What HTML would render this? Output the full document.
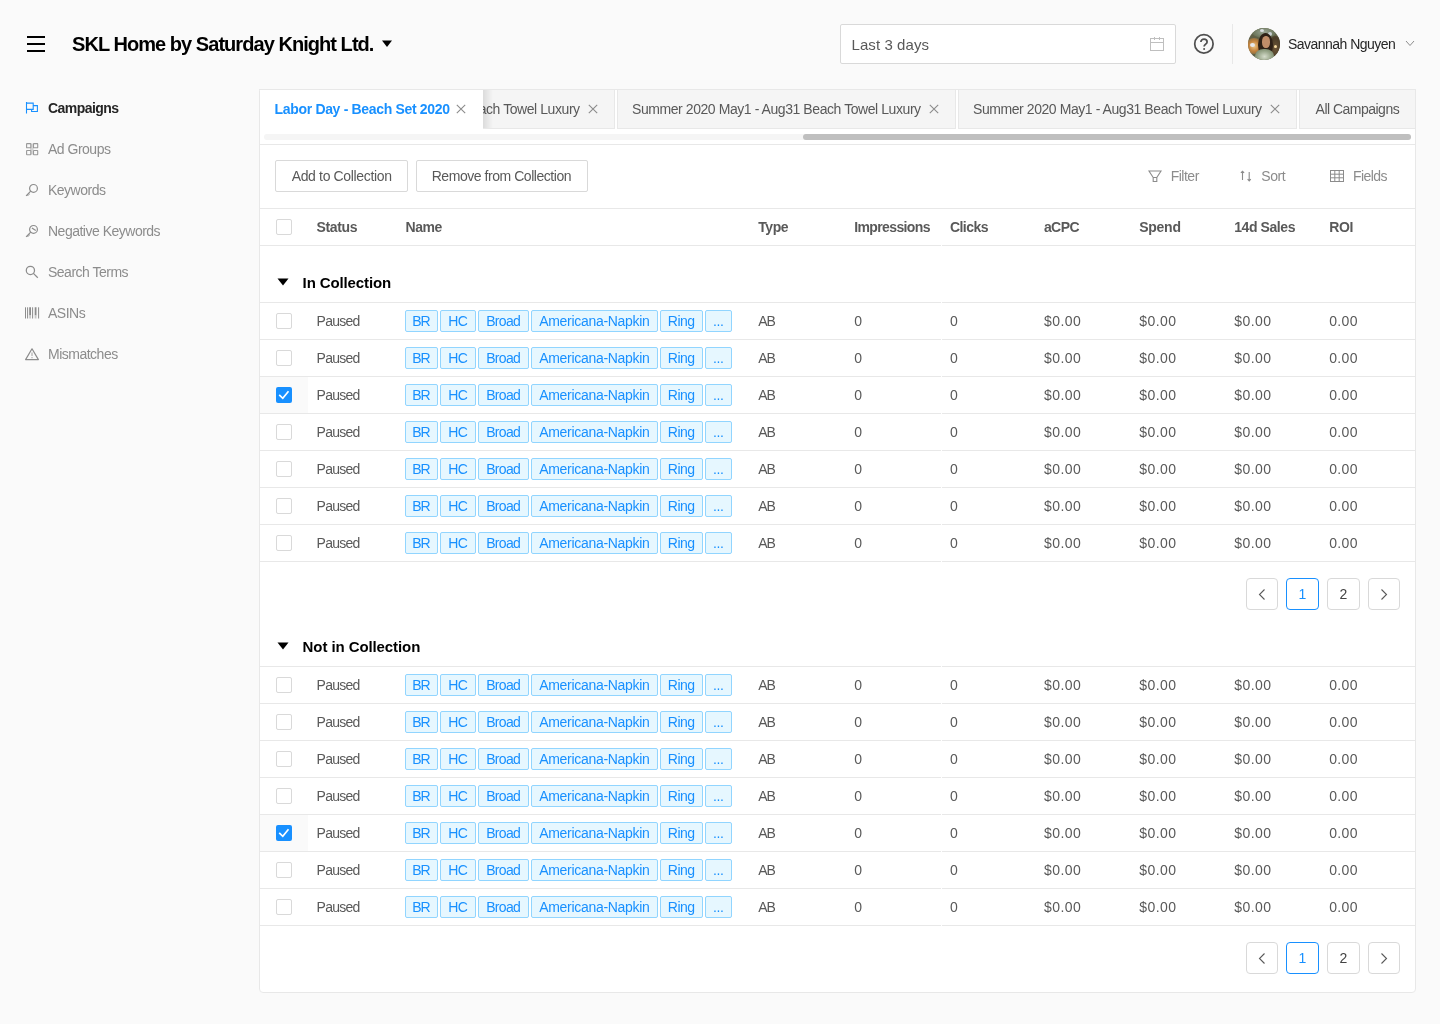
<!DOCTYPE html>
<html><head><meta charset="utf-8"><title>Campaigns</title>
<style>
html,body{margin:0;padding:0;}
body{width:1440px;height:1024px;overflow:hidden;background:#fafafa;font-family:"Liberation Sans", sans-serif;position:relative;}
.a{position:absolute;}
.t{position:absolute;white-space:nowrap;}
svg.a{overflow:visible;}
</style></head><body><div id="root" style="position:absolute;left:0;top:0;width:1440px;height:1024px;will-change:transform">
<div class="a" style="left:27px;top:36px;width:18px;height:2px;background:#000;"></div>
<div class="a" style="left:27px;top:43px;width:18px;height:2px;background:#000;"></div>
<div class="a" style="left:27px;top:50px;width:18px;height:2px;background:#000;"></div>
<div class="t" style="left:72px;top:32.87px;font-size:20px;line-height:22px;color:#000;font-weight:bold;letter-spacing:-0.95px;">SKL Home by Saturday Knight Ltd.</div>
<svg class="a" style="left:381px;top:40px" width="12" height="8" viewBox="0 0 12 8"><path d="M1 0.5 L11 0.5 L6 7 Z" fill="#000"/></svg>
<div class="a" style="left:840px;top:24px;width:336px;height:40px;box-sizing:border-box;border:1px solid #d9d9d9;border-radius:2px;background:#fff;"></div>
<div class="t" style="left:851.5px;top:36.10px;font-size:15px;line-height:17px;color:#595959;letter-spacing:0.08px;">Last 3 days</div>
<svg class="a" style="left:1149px;top:36px" width="16" height="16" viewBox="0 0 16 16" fill="none" stroke="#bfbfbf" stroke-width="1"><rect x="1.5" y="2.5" width="13" height="12"/><path d="M1.5 6.5 H14.5 M5.5 1 V4 M10.5 1 V4"/></svg>
<svg class="a" style="left:1192px;top:32px" width="24" height="24" viewBox="0 0 24 24" fill="none" stroke="#4f4f4f" stroke-width="1.75"><circle cx="11.9" cy="11.9" r="9.2"/><path d="M8.9 10 C8.9 8 10.3 7.1 12 7.1 C13.8 7.1 15.1 8.2 15.1 9.9 C15.1 11.9 12.1 12.3 12.1 14.6"/><circle cx="12.1" cy="17.05" r="1" fill="#4f4f4f" stroke="none"/></svg>
<div class="a" style="left:1232px;top:24px;width:1px;height:40px;background:#e8e8e8;"></div>
<div class="a" style="left:1248px;top:28px;width:32px;height:32px;border-radius:50%;overflow:hidden;background:#5f6147;"><div class="a" style="left:-2px;top:-2px;width:36px;height:36px;filter:blur(0.6px);"><div class="a" style="left:6px;top:0px;width:24px;height:12px;border-radius:50%;background:radial-gradient(ellipse, #9aa596 0, #6f7a5f 60%, rgba(95,97,71,0) 100%);"></div><div class="a" style="left:14px;top:3px;width:4px;height:3px;border-radius:50%;background:#d8dde0;"></div><div class="a" style="left:22px;top:6px;width:4px;height:4px;border-radius:50%;background:#c9d0d4;"></div><div class="a" style="left:0px;top:12px;width:16px;height:16px;border-radius:50%;background:radial-gradient(ellipse, #f0c98a 0, #c2833f 45%, rgba(95,97,71,0) 100%);"></div><div class="a" style="left:4px;top:17px;width:5px;height:4px;border-radius:50%;background:#e6e9ee;"></div><div class="a" style="left:23px;top:10px;width:13px;height:24px;border-radius:40%;background:radial-gradient(ellipse, #6d5638 0, #4a3c28 60%, rgba(60,50,35,0) 100%);"></div><div class="a" style="left:28px;top:19px;width:3px;height:3px;border-radius:50%;background:#f4d9a0;"></div><div class="a" style="left:12px;top:7px;width:15px;height:24px;border-radius:50%;background:#2e2117;"></div><div class="a" style="left:16px;top:10px;width:8px;height:12px;border-radius:45%;background:#c08d69;"></div><div class="a" style="left:9px;top:23px;width:19px;height:15px;border-radius:45%;background:radial-gradient(ellipse, #d5dccb 0, #93a184 55%, #66745a 100%);"></div></div></div>
<div class="t" style="left:1288px;top:36.05px;font-size:14px;line-height:16px;color:#262626;letter-spacing:-0.529px;">Savannah Nguyen</div>
<svg class="a" style="left:1404px;top:38px" width="12" height="10" viewBox="0 0 12 10" fill="none" stroke="#8c8c8c" stroke-width="1"><path d="M2 3 L6 7.5 L10 3"/></svg>
<div class="t" style="left:48px;top:99.85px;font-size:14px;line-height:16px;color:#262626;font-weight:bold;letter-spacing:-0.55px;">Campaigns</div>
<svg class="a" style="left:25px;top:102px" width="14" height="13" viewBox="0 0 14 13" fill="none" stroke-width="1"><path d="M1.5 0 V11.6 M1.5 1.1 H8.2 V7.4 H1.5 M8.2 3.6 H12.4 V9.5 H6.6 V7.4" stroke="#1890ff" stroke-width="1.1"/></svg>
<div class="t" style="left:48px;top:140.85px;font-size:14px;line-height:16px;color:#8c8c8c;letter-spacing:-0.5px;">Ad Groups</div>
<svg class="a" style="left:25px;top:143px" width="14" height="13" viewBox="0 0 14 13" fill="none" stroke-width="1"><path d="M5 6 H8.5 M6.9 0.5 V11.5" stroke="#d4d4d4" stroke-width="2"/><g stroke="#999" stroke-width="1.1"><rect x="1.6" y="0.6" width="4.2" height="4.2" rx="0.4"/><rect x="8.5" y="0.6" width="4.2" height="4.2" rx="0.4"/><rect x="1.6" y="7.5" width="4.2" height="4.2" rx="0.4"/><rect x="8.5" y="7.5" width="4.2" height="4.2" rx="0.4"/></g></svg>
<div class="t" style="left:48px;top:181.85px;font-size:14px;line-height:16px;color:#8c8c8c;letter-spacing:-0.5px;">Keywords</div>
<svg class="a" style="left:25px;top:184px" width="14" height="13" viewBox="0 0 14 13" fill="none" stroke-width="1"><g stroke="#8c8c8c" stroke-width="1.2"><circle cx="8.5" cy="4.4" r="3.9"/><path d="M5.7 7.2 L1.1 11.8 M2.4 10.5 L3.4 11.5 M3.6 9.3 L4.6 10.3"/></g></svg>
<div class="t" style="left:48px;top:222.85px;font-size:14px;line-height:16px;color:#8c8c8c;letter-spacing:-0.5px;">Negative Keywords</div>
<svg class="a" style="left:25px;top:225px" width="14" height="13" viewBox="0 0 14 13" fill="none" stroke-width="1"><g stroke="#8c8c8c" stroke-width="1.2"><circle cx="8.5" cy="4.4" r="3.9"/><path d="M5.7 7.2 L1.1 11.8 M2.4 10.5 L3.4 11.5 M3.6 9.3 L4.6 10.3 M6.9 3.0 L10.8 5.6"/></g></svg>
<div class="t" style="left:48px;top:263.85px;font-size:14px;line-height:16px;color:#8c8c8c;letter-spacing:-0.5px;">Search Terms</div>
<svg class="a" style="left:25px;top:266px" width="14" height="13" viewBox="0 0 14 13" fill="none" stroke-width="1"><g stroke="#8c8c8c" stroke-width="1.25"><circle cx="5.4" cy="4.4" r="4.1"/><path d="M8.4 7.4 L12.8 11.7"/></g></svg>
<div class="t" style="left:48px;top:304.85px;font-size:14px;line-height:16px;color:#8c8c8c;letter-spacing:-0.5px;">ASINs</div>
<svg class="a" style="left:25px;top:307px" width="14" height="13" viewBox="0 0 14 13" fill="none" stroke-width="1"><g stroke="#8c8c8c"><path d="M0.5 0.3 V11.5 M2.6 0.3 V11.5 M7.6 0.3 V11.5 M13.6 0.3 V11.5" stroke-width="1"/><path d="M5.1 0.3 V8.5 M10.6 0.3 V8.5" stroke-width="1.8"/><path d="M5.1 8.5 V11.5 M10.6 8.5 V11.5" stroke="#c8c8c8" stroke-width="1.8"/></g></svg>
<div class="t" style="left:48px;top:345.85px;font-size:14px;line-height:16px;color:#8c8c8c;letter-spacing:-0.5px;">Mismatches</div>
<svg class="a" style="left:25px;top:348px" width="14" height="13" viewBox="0 0 14 13" fill="none" stroke-width="1"><g stroke="#8c8c8c" stroke-width="1.2"><path d="M7 0.8 L13.4 11.6 H0.6 Z" stroke-linejoin="round"/><path d="M7 4.4 V8.0 M7 9.1 V10.2" stroke="#b0b0b0"/></g></svg>
<div class="a" style="left:259px;top:89px;width:1157px;height:904px;box-sizing:border-box;border:1px solid #e8e8e8;border-radius:2px 2px 4px 4px;background:#fff;"></div>
<div class="a" style="left:276px;top:89px;width:339px;height:40px;box-sizing:border-box;border:1px solid #e8e8e8;background:#f5f5f5;"></div>
<div class="t" style="left:291px;top:101.15px;font-size:14px;line-height:16px;color:#595959;letter-spacing:-0.429px;">Summer 2020 May1 - Aug31 Beach Towel Luxury</div>
<svg class="a" style="left:588px;top:104px" width="10" height="10" viewBox="0 0 10 10" fill="none" stroke="#8c8c8c" stroke-width="1.1"><path d="M0.8 0.8 L9.2 9.2 M9.2 0.8 L0.8 9.2"/></svg>
<div class="a" style="left:617px;top:89px;width:339px;height:40px;box-sizing:border-box;border:1px solid #e8e8e8;background:#f5f5f5;"></div>
<div class="t" style="left:632px;top:101.15px;font-size:14px;line-height:16px;color:#595959;letter-spacing:-0.429px;">Summer 2020 May1 - Aug31 Beach Towel Luxury</div>
<svg class="a" style="left:929px;top:104px" width="10" height="10" viewBox="0 0 10 10" fill="none" stroke="#8c8c8c" stroke-width="1.1"><path d="M0.8 0.8 L9.2 9.2 M9.2 0.8 L0.8 9.2"/></svg>
<div class="a" style="left:958px;top:89px;width:339px;height:40px;box-sizing:border-box;border:1px solid #e8e8e8;background:#f5f5f5;"></div>
<div class="t" style="left:973px;top:101.15px;font-size:14px;line-height:16px;color:#595959;letter-spacing:-0.429px;">Summer 2020 May1 - Aug31 Beach Towel Luxury</div>
<svg class="a" style="left:1270px;top:104px" width="10" height="10" viewBox="0 0 10 10" fill="none" stroke="#8c8c8c" stroke-width="1.1"><path d="M0.8 0.8 L9.2 9.2 M9.2 0.8 L0.8 9.2"/></svg>
<div class="a" style="left:1299px;top:89px;width:117px;height:40px;box-sizing:border-box;border:1px solid #e8e8e8;background:#f5f5f5;"></div>
<div class="t" style="left:1315.6px;top:101.15px;font-size:14px;line-height:16px;color:#595959;letter-spacing:-0.517px;">All Campaigns</div>
<div class="a" style="left:260px;top:90px;width:223px;height:39px;background:#fff;"></div>
<div class="a" style="left:483px;top:90px;width:10px;height:38px;background:linear-gradient(to right, rgba(0,0,0,0.10), rgba(0,0,0,0));"></div>
<div class="a" style="left:259px;top:89px;width:225px;height:1px;background:#e8e8e8;"></div>
<div class="t" style="left:274.6px;top:101.15px;font-size:14px;line-height:16px;color:#1890ff;font-weight:bold;letter-spacing:-0.332px;">Labor Day - Beach Set 2020</div>
<svg class="a" style="left:456px;top:104px" width="10" height="10" viewBox="0 0 10 10" fill="none" stroke="#8c8c8c" stroke-width="1.1"><path d="M0.8 0.8 L9.2 9.2 M9.2 0.8 L0.8 9.2"/></svg>
<div class="a" style="left:264px;top:134px;width:1147px;height:6px;background:#f5f5f5;border-radius:3px;"></div>
<div class="a" style="left:803px;top:134px;width:608px;height:6px;background:#bfbfbf;border-radius:3px;"></div>
<div class="a" style="left:260px;top:144px;width:1155px;height:1px;background:#e8e8e8;"></div>
<div class="a" style="left:275px;top:160px;width:133px;height:32px;box-sizing:border-box;border:1px solid #d9d9d9;border-radius:2px;background:#fff;"></div>
<div class="t" style="left:291.7px;top:168.15px;font-size:14px;line-height:16px;color:#595959;letter-spacing:-0.35px;">Add to Collection</div>
<div class="a" style="left:416px;top:160px;width:172px;height:32px;box-sizing:border-box;border:1px solid #d9d9d9;border-radius:2px;background:#fff;"></div>
<div class="t" style="left:431.7px;top:168.15px;font-size:14px;line-height:16px;color:#595959;letter-spacing:-0.452px;">Remove from Collection</div>
<svg class="a" style="left:1148px;top:170px" width="14" height="13" viewBox="0 0 14 13" fill="none" stroke="#8c8c8c" stroke-width="1.1"><path d="M1 1 H13 L8.8 7.5 H5.2 Z M5.2 7.5 V11.5 H8.8 V7.5"/></svg>
<div class="t" style="left:1170.7px;top:167.95px;font-size:14px;line-height:16px;color:#8c8c8c;letter-spacing:-0.5px;">Filter</div>
<svg class="a" style="left:1239px;top:170px" width="14" height="12" viewBox="0 0 14 12" fill="none" stroke="#8c8c8c" stroke-width="1.1"><path d="M3.5 1.2 V10 M1.9 2.9 L3.5 1.2 L5.1 2.9 M10.2 2 V11 M8.6 9.2 L10.2 10.9 L11.8 9.2"/></svg>
<div class="t" style="left:1261.3px;top:167.95px;font-size:14px;line-height:16px;color:#8c8c8c;letter-spacing:-0.467px;">Sort</div>
<svg class="a" style="left:1330px;top:170px" width="14" height="12" viewBox="0 0 14 12" fill="none" stroke="#8c8c8c" stroke-width="1"><rect x="0.5" y="0.5" width="13" height="11"/><path d="M0.5 4.2 H13.5 M0.5 7.8 H13.5 M4.8 0.5 V11.5 M9.2 0.5 V11.5"/></svg>
<div class="t" style="left:1352.9px;top:167.95px;font-size:14px;line-height:16px;color:#8c8c8c;letter-spacing:-0.54px;">Fields</div>
<div class="a" style="left:260px;top:208px;width:1155px;height:1px;background:#e8e8e8;"></div>
<div class="a" style="left:276px;top:219px;width:16px;height:16px;box-sizing:border-box;border:1px solid #d9d9d9;border-radius:2px;background:#fff;"></div>
<div class="t" style="left:316.4px;top:219.15px;font-size:14px;line-height:16px;color:#595959;font-weight:bold;letter-spacing:-0.32px;">Status</div>
<div class="t" style="left:405.6px;top:219.15px;font-size:14px;line-height:16px;color:#595959;font-weight:bold;letter-spacing:-0.5px;">Name</div>
<div class="t" style="left:758.3px;top:219.15px;font-size:14px;line-height:16px;color:#595959;font-weight:bold;letter-spacing:-0.467px;">Type</div>
<div class="t" style="left:854.3px;top:219.15px;font-size:14px;line-height:16px;color:#595959;font-weight:bold;letter-spacing:-0.63px;">Impressions</div>
<div class="t" style="left:949.9px;top:219.15px;font-size:14px;line-height:16px;color:#595959;font-weight:bold;letter-spacing:-0.54px;">Clicks</div>
<div class="t" style="left:1043.9px;top:219.15px;font-size:14px;line-height:16px;color:#595959;font-weight:bold;letter-spacing:-0.567px;">aCPC</div>
<div class="t" style="left:1139.2px;top:219.15px;font-size:14px;line-height:16px;color:#595959;font-weight:bold;letter-spacing:-0.25px;">Spend</div>
<div class="t" style="left:1234.2px;top:219.15px;font-size:14px;line-height:16px;color:#595959;font-weight:bold;letter-spacing:-0.412px;">14d Sales</div>
<div class="t" style="left:1329.2px;top:219.15px;font-size:14px;line-height:16px;color:#595959;font-weight:bold;letter-spacing:-0.4px;">ROI</div>
<div class="a" style="left:260px;top:245px;width:681px;height:1px;background:#e8e8e8;"></div><div class="a" style="left:942px;top:245px;width:473px;height:1px;background:#e8e8e8;"></div>
<svg class="a" style="left:277px;top:278.1px" width="12" height="8" viewBox="0 0 12 8"><path d="M0.5 0.5 H11.5 L6 7.5 Z" fill="#000"/></svg>
<div class="t" style="left:302.6px;top:274.40px;font-size:15px;line-height:17px;color:#000;font-weight:bold;letter-spacing:-0.117px;">In Collection</div>
<div class="a" style="left:260px;top:302px;width:681px;height:1px;background:#e8e8e8;"></div><div class="a" style="left:942px;top:302px;width:473px;height:1px;background:#e8e8e8;"></div>
<div class="a" style="left:276px;top:313px;width:16px;height:16px;box-sizing:border-box;border:1px solid #d9d9d9;border-radius:2px;background:#fff;"></div><div class="t" style="left:316.6px;top:313.35px;font-size:14px;line-height:16px;color:#595959;letter-spacing:-0.76px;">Paused</div><div class="a" style="left:405px;top:310px;width:33px;height:22px;box-sizing:border-box;border:1px solid #91d5ff;border-radius:2px;background:#e6f7ff;"></div><div class="t" style="left:405px;width:33px;top:313.15px;font-size:14px;line-height:16px;color:#1890ff;text-align:center;letter-spacing:-1.0px;text-indent:-1.0px">BR</div><div class="a" style="left:440px;top:310px;width:36px;height:22px;box-sizing:border-box;border:1px solid #91d5ff;border-radius:2px;background:#e6f7ff;"></div><div class="t" style="left:440px;width:36px;top:313.15px;font-size:14px;line-height:16px;color:#1890ff;text-align:center;letter-spacing:-0.7px;text-indent:-0.7px">HC</div><div class="a" style="left:478px;top:310px;width:51px;height:22px;box-sizing:border-box;border:1px solid #91d5ff;border-radius:2px;background:#e6f7ff;"></div><div class="t" style="left:478px;width:51px;top:313.15px;font-size:14px;line-height:16px;color:#1890ff;text-align:center;letter-spacing:-0.65px;text-indent:-0.65px">Broad</div><div class="a" style="left:531px;top:310px;width:127px;height:22px;box-sizing:border-box;border:1px solid #91d5ff;border-radius:2px;background:#e6f7ff;"></div><div class="t" style="left:531px;width:127px;top:313.15px;font-size:14px;line-height:16px;color:#1890ff;text-align:center;letter-spacing:-0.3px;text-indent:-0.3px">Americana-Napkin</div><div class="a" style="left:660px;top:310px;width:43px;height:22px;box-sizing:border-box;border:1px solid #91d5ff;border-radius:2px;background:#e6f7ff;"></div><div class="t" style="left:660px;width:43px;top:313.15px;font-size:14px;line-height:16px;color:#1890ff;text-align:center;letter-spacing:-0.5px;text-indent:-0.5px">Ring</div><div class="a" style="left:705px;top:310px;width:27px;height:22px;box-sizing:border-box;border:1px solid #91d5ff;border-radius:2px;background:#e6f7ff;"></div><div class="t" style="left:705px;width:27px;top:313.15px;font-size:14px;line-height:16px;color:#1890ff;text-align:center;letter-spacing:-0.45px;text-indent:-0.45px">...</div><div class="t" style="left:758.2px;top:313.35px;font-size:14px;line-height:16px;color:#595959;letter-spacing:-1.0px;">AB</div><div class="t" style="left:854.3px;top:313.35px;font-size:14px;line-height:16px;color:#595959;letter-spacing:-0.45px;">0</div><div class="t" style="left:949.9px;top:313.35px;font-size:14px;line-height:16px;color:#595959;letter-spacing:-0.45px;">0</div><div class="t" style="left:1043.9px;top:313.35px;font-size:14px;line-height:16px;color:#595959;letter-spacing:0.475px;">$0.00</div><div class="t" style="left:1139.2px;top:313.35px;font-size:14px;line-height:16px;color:#595959;letter-spacing:0.475px;">$0.00</div><div class="t" style="left:1234.2px;top:313.35px;font-size:14px;line-height:16px;color:#595959;letter-spacing:0.475px;">$0.00</div><div class="t" style="left:1329.2px;top:313.35px;font-size:14px;line-height:16px;color:#595959;letter-spacing:0.333px;">0.00</div><div class="a" style="left:260px;top:339px;width:681px;height:1px;background:#e8e8e8;"></div><div class="a" style="left:942px;top:339px;width:473px;height:1px;background:#e8e8e8;"></div>
<div class="a" style="left:276px;top:350px;width:16px;height:16px;box-sizing:border-box;border:1px solid #d9d9d9;border-radius:2px;background:#fff;"></div><div class="t" style="left:316.6px;top:350.35px;font-size:14px;line-height:16px;color:#595959;letter-spacing:-0.76px;">Paused</div><div class="a" style="left:405px;top:347px;width:33px;height:22px;box-sizing:border-box;border:1px solid #91d5ff;border-radius:2px;background:#e6f7ff;"></div><div class="t" style="left:405px;width:33px;top:350.15px;font-size:14px;line-height:16px;color:#1890ff;text-align:center;letter-spacing:-1.0px;text-indent:-1.0px">BR</div><div class="a" style="left:440px;top:347px;width:36px;height:22px;box-sizing:border-box;border:1px solid #91d5ff;border-radius:2px;background:#e6f7ff;"></div><div class="t" style="left:440px;width:36px;top:350.15px;font-size:14px;line-height:16px;color:#1890ff;text-align:center;letter-spacing:-0.7px;text-indent:-0.7px">HC</div><div class="a" style="left:478px;top:347px;width:51px;height:22px;box-sizing:border-box;border:1px solid #91d5ff;border-radius:2px;background:#e6f7ff;"></div><div class="t" style="left:478px;width:51px;top:350.15px;font-size:14px;line-height:16px;color:#1890ff;text-align:center;letter-spacing:-0.65px;text-indent:-0.65px">Broad</div><div class="a" style="left:531px;top:347px;width:127px;height:22px;box-sizing:border-box;border:1px solid #91d5ff;border-radius:2px;background:#e6f7ff;"></div><div class="t" style="left:531px;width:127px;top:350.15px;font-size:14px;line-height:16px;color:#1890ff;text-align:center;letter-spacing:-0.3px;text-indent:-0.3px">Americana-Napkin</div><div class="a" style="left:660px;top:347px;width:43px;height:22px;box-sizing:border-box;border:1px solid #91d5ff;border-radius:2px;background:#e6f7ff;"></div><div class="t" style="left:660px;width:43px;top:350.15px;font-size:14px;line-height:16px;color:#1890ff;text-align:center;letter-spacing:-0.5px;text-indent:-0.5px">Ring</div><div class="a" style="left:705px;top:347px;width:27px;height:22px;box-sizing:border-box;border:1px solid #91d5ff;border-radius:2px;background:#e6f7ff;"></div><div class="t" style="left:705px;width:27px;top:350.15px;font-size:14px;line-height:16px;color:#1890ff;text-align:center;letter-spacing:-0.45px;text-indent:-0.45px">...</div><div class="t" style="left:758.2px;top:350.35px;font-size:14px;line-height:16px;color:#595959;letter-spacing:-1.0px;">AB</div><div class="t" style="left:854.3px;top:350.35px;font-size:14px;line-height:16px;color:#595959;letter-spacing:-0.45px;">0</div><div class="t" style="left:949.9px;top:350.35px;font-size:14px;line-height:16px;color:#595959;letter-spacing:-0.45px;">0</div><div class="t" style="left:1043.9px;top:350.35px;font-size:14px;line-height:16px;color:#595959;letter-spacing:0.475px;">$0.00</div><div class="t" style="left:1139.2px;top:350.35px;font-size:14px;line-height:16px;color:#595959;letter-spacing:0.475px;">$0.00</div><div class="t" style="left:1234.2px;top:350.35px;font-size:14px;line-height:16px;color:#595959;letter-spacing:0.475px;">$0.00</div><div class="t" style="left:1329.2px;top:350.35px;font-size:14px;line-height:16px;color:#595959;letter-spacing:0.333px;">0.00</div><div class="a" style="left:260px;top:376px;width:681px;height:1px;background:#e8e8e8;"></div><div class="a" style="left:942px;top:376px;width:473px;height:1px;background:#e8e8e8;"></div>
<div class="a" style="left:260px;top:377px;width:48px;height:36px;background:#fafafa;"></div><div class="a" style="left:276px;top:387px;width:16px;height:16px;border-radius:2px;background:#1890ff;"></div><svg class="a" style="left:276px;top:387px" width="16" height="16" viewBox="0 0 16 16" fill="none" stroke="#fff" stroke-width="1.7"><path d="M3.2 7.8 L6.8 11.3 L12.5 4.2"/></svg><div class="t" style="left:316.6px;top:387.35px;font-size:14px;line-height:16px;color:#595959;letter-spacing:-0.76px;">Paused</div><div class="a" style="left:405px;top:384px;width:33px;height:22px;box-sizing:border-box;border:1px solid #91d5ff;border-radius:2px;background:#e6f7ff;"></div><div class="t" style="left:405px;width:33px;top:387.15px;font-size:14px;line-height:16px;color:#1890ff;text-align:center;letter-spacing:-1.0px;text-indent:-1.0px">BR</div><div class="a" style="left:440px;top:384px;width:36px;height:22px;box-sizing:border-box;border:1px solid #91d5ff;border-radius:2px;background:#e6f7ff;"></div><div class="t" style="left:440px;width:36px;top:387.15px;font-size:14px;line-height:16px;color:#1890ff;text-align:center;letter-spacing:-0.7px;text-indent:-0.7px">HC</div><div class="a" style="left:478px;top:384px;width:51px;height:22px;box-sizing:border-box;border:1px solid #91d5ff;border-radius:2px;background:#e6f7ff;"></div><div class="t" style="left:478px;width:51px;top:387.15px;font-size:14px;line-height:16px;color:#1890ff;text-align:center;letter-spacing:-0.65px;text-indent:-0.65px">Broad</div><div class="a" style="left:531px;top:384px;width:127px;height:22px;box-sizing:border-box;border:1px solid #91d5ff;border-radius:2px;background:#e6f7ff;"></div><div class="t" style="left:531px;width:127px;top:387.15px;font-size:14px;line-height:16px;color:#1890ff;text-align:center;letter-spacing:-0.3px;text-indent:-0.3px">Americana-Napkin</div><div class="a" style="left:660px;top:384px;width:43px;height:22px;box-sizing:border-box;border:1px solid #91d5ff;border-radius:2px;background:#e6f7ff;"></div><div class="t" style="left:660px;width:43px;top:387.15px;font-size:14px;line-height:16px;color:#1890ff;text-align:center;letter-spacing:-0.5px;text-indent:-0.5px">Ring</div><div class="a" style="left:705px;top:384px;width:27px;height:22px;box-sizing:border-box;border:1px solid #91d5ff;border-radius:2px;background:#e6f7ff;"></div><div class="t" style="left:705px;width:27px;top:387.15px;font-size:14px;line-height:16px;color:#1890ff;text-align:center;letter-spacing:-0.45px;text-indent:-0.45px">...</div><div class="t" style="left:758.2px;top:387.35px;font-size:14px;line-height:16px;color:#595959;letter-spacing:-1.0px;">AB</div><div class="t" style="left:854.3px;top:387.35px;font-size:14px;line-height:16px;color:#595959;letter-spacing:-0.45px;">0</div><div class="t" style="left:949.9px;top:387.35px;font-size:14px;line-height:16px;color:#595959;letter-spacing:-0.45px;">0</div><div class="t" style="left:1043.9px;top:387.35px;font-size:14px;line-height:16px;color:#595959;letter-spacing:0.475px;">$0.00</div><div class="t" style="left:1139.2px;top:387.35px;font-size:14px;line-height:16px;color:#595959;letter-spacing:0.475px;">$0.00</div><div class="t" style="left:1234.2px;top:387.35px;font-size:14px;line-height:16px;color:#595959;letter-spacing:0.475px;">$0.00</div><div class="t" style="left:1329.2px;top:387.35px;font-size:14px;line-height:16px;color:#595959;letter-spacing:0.333px;">0.00</div><div class="a" style="left:260px;top:413px;width:681px;height:1px;background:#e8e8e8;"></div><div class="a" style="left:942px;top:413px;width:473px;height:1px;background:#e8e8e8;"></div>
<div class="a" style="left:276px;top:424px;width:16px;height:16px;box-sizing:border-box;border:1px solid #d9d9d9;border-radius:2px;background:#fff;"></div><div class="t" style="left:316.6px;top:424.35px;font-size:14px;line-height:16px;color:#595959;letter-spacing:-0.76px;">Paused</div><div class="a" style="left:405px;top:421px;width:33px;height:22px;box-sizing:border-box;border:1px solid #91d5ff;border-radius:2px;background:#e6f7ff;"></div><div class="t" style="left:405px;width:33px;top:424.15px;font-size:14px;line-height:16px;color:#1890ff;text-align:center;letter-spacing:-1.0px;text-indent:-1.0px">BR</div><div class="a" style="left:440px;top:421px;width:36px;height:22px;box-sizing:border-box;border:1px solid #91d5ff;border-radius:2px;background:#e6f7ff;"></div><div class="t" style="left:440px;width:36px;top:424.15px;font-size:14px;line-height:16px;color:#1890ff;text-align:center;letter-spacing:-0.7px;text-indent:-0.7px">HC</div><div class="a" style="left:478px;top:421px;width:51px;height:22px;box-sizing:border-box;border:1px solid #91d5ff;border-radius:2px;background:#e6f7ff;"></div><div class="t" style="left:478px;width:51px;top:424.15px;font-size:14px;line-height:16px;color:#1890ff;text-align:center;letter-spacing:-0.65px;text-indent:-0.65px">Broad</div><div class="a" style="left:531px;top:421px;width:127px;height:22px;box-sizing:border-box;border:1px solid #91d5ff;border-radius:2px;background:#e6f7ff;"></div><div class="t" style="left:531px;width:127px;top:424.15px;font-size:14px;line-height:16px;color:#1890ff;text-align:center;letter-spacing:-0.3px;text-indent:-0.3px">Americana-Napkin</div><div class="a" style="left:660px;top:421px;width:43px;height:22px;box-sizing:border-box;border:1px solid #91d5ff;border-radius:2px;background:#e6f7ff;"></div><div class="t" style="left:660px;width:43px;top:424.15px;font-size:14px;line-height:16px;color:#1890ff;text-align:center;letter-spacing:-0.5px;text-indent:-0.5px">Ring</div><div class="a" style="left:705px;top:421px;width:27px;height:22px;box-sizing:border-box;border:1px solid #91d5ff;border-radius:2px;background:#e6f7ff;"></div><div class="t" style="left:705px;width:27px;top:424.15px;font-size:14px;line-height:16px;color:#1890ff;text-align:center;letter-spacing:-0.45px;text-indent:-0.45px">...</div><div class="t" style="left:758.2px;top:424.35px;font-size:14px;line-height:16px;color:#595959;letter-spacing:-1.0px;">AB</div><div class="t" style="left:854.3px;top:424.35px;font-size:14px;line-height:16px;color:#595959;letter-spacing:-0.45px;">0</div><div class="t" style="left:949.9px;top:424.35px;font-size:14px;line-height:16px;color:#595959;letter-spacing:-0.45px;">0</div><div class="t" style="left:1043.9px;top:424.35px;font-size:14px;line-height:16px;color:#595959;letter-spacing:0.475px;">$0.00</div><div class="t" style="left:1139.2px;top:424.35px;font-size:14px;line-height:16px;color:#595959;letter-spacing:0.475px;">$0.00</div><div class="t" style="left:1234.2px;top:424.35px;font-size:14px;line-height:16px;color:#595959;letter-spacing:0.475px;">$0.00</div><div class="t" style="left:1329.2px;top:424.35px;font-size:14px;line-height:16px;color:#595959;letter-spacing:0.333px;">0.00</div><div class="a" style="left:260px;top:450px;width:681px;height:1px;background:#e8e8e8;"></div><div class="a" style="left:942px;top:450px;width:473px;height:1px;background:#e8e8e8;"></div>
<div class="a" style="left:276px;top:461px;width:16px;height:16px;box-sizing:border-box;border:1px solid #d9d9d9;border-radius:2px;background:#fff;"></div><div class="t" style="left:316.6px;top:461.35px;font-size:14px;line-height:16px;color:#595959;letter-spacing:-0.76px;">Paused</div><div class="a" style="left:405px;top:458px;width:33px;height:22px;box-sizing:border-box;border:1px solid #91d5ff;border-radius:2px;background:#e6f7ff;"></div><div class="t" style="left:405px;width:33px;top:461.15px;font-size:14px;line-height:16px;color:#1890ff;text-align:center;letter-spacing:-1.0px;text-indent:-1.0px">BR</div><div class="a" style="left:440px;top:458px;width:36px;height:22px;box-sizing:border-box;border:1px solid #91d5ff;border-radius:2px;background:#e6f7ff;"></div><div class="t" style="left:440px;width:36px;top:461.15px;font-size:14px;line-height:16px;color:#1890ff;text-align:center;letter-spacing:-0.7px;text-indent:-0.7px">HC</div><div class="a" style="left:478px;top:458px;width:51px;height:22px;box-sizing:border-box;border:1px solid #91d5ff;border-radius:2px;background:#e6f7ff;"></div><div class="t" style="left:478px;width:51px;top:461.15px;font-size:14px;line-height:16px;color:#1890ff;text-align:center;letter-spacing:-0.65px;text-indent:-0.65px">Broad</div><div class="a" style="left:531px;top:458px;width:127px;height:22px;box-sizing:border-box;border:1px solid #91d5ff;border-radius:2px;background:#e6f7ff;"></div><div class="t" style="left:531px;width:127px;top:461.15px;font-size:14px;line-height:16px;color:#1890ff;text-align:center;letter-spacing:-0.3px;text-indent:-0.3px">Americana-Napkin</div><div class="a" style="left:660px;top:458px;width:43px;height:22px;box-sizing:border-box;border:1px solid #91d5ff;border-radius:2px;background:#e6f7ff;"></div><div class="t" style="left:660px;width:43px;top:461.15px;font-size:14px;line-height:16px;color:#1890ff;text-align:center;letter-spacing:-0.5px;text-indent:-0.5px">Ring</div><div class="a" style="left:705px;top:458px;width:27px;height:22px;box-sizing:border-box;border:1px solid #91d5ff;border-radius:2px;background:#e6f7ff;"></div><div class="t" style="left:705px;width:27px;top:461.15px;font-size:14px;line-height:16px;color:#1890ff;text-align:center;letter-spacing:-0.45px;text-indent:-0.45px">...</div><div class="t" style="left:758.2px;top:461.35px;font-size:14px;line-height:16px;color:#595959;letter-spacing:-1.0px;">AB</div><div class="t" style="left:854.3px;top:461.35px;font-size:14px;line-height:16px;color:#595959;letter-spacing:-0.45px;">0</div><div class="t" style="left:949.9px;top:461.35px;font-size:14px;line-height:16px;color:#595959;letter-spacing:-0.45px;">0</div><div class="t" style="left:1043.9px;top:461.35px;font-size:14px;line-height:16px;color:#595959;letter-spacing:0.475px;">$0.00</div><div class="t" style="left:1139.2px;top:461.35px;font-size:14px;line-height:16px;color:#595959;letter-spacing:0.475px;">$0.00</div><div class="t" style="left:1234.2px;top:461.35px;font-size:14px;line-height:16px;color:#595959;letter-spacing:0.475px;">$0.00</div><div class="t" style="left:1329.2px;top:461.35px;font-size:14px;line-height:16px;color:#595959;letter-spacing:0.333px;">0.00</div><div class="a" style="left:260px;top:487px;width:681px;height:1px;background:#e8e8e8;"></div><div class="a" style="left:942px;top:487px;width:473px;height:1px;background:#e8e8e8;"></div>
<div class="a" style="left:276px;top:498px;width:16px;height:16px;box-sizing:border-box;border:1px solid #d9d9d9;border-radius:2px;background:#fff;"></div><div class="t" style="left:316.6px;top:498.35px;font-size:14px;line-height:16px;color:#595959;letter-spacing:-0.76px;">Paused</div><div class="a" style="left:405px;top:495px;width:33px;height:22px;box-sizing:border-box;border:1px solid #91d5ff;border-radius:2px;background:#e6f7ff;"></div><div class="t" style="left:405px;width:33px;top:498.15px;font-size:14px;line-height:16px;color:#1890ff;text-align:center;letter-spacing:-1.0px;text-indent:-1.0px">BR</div><div class="a" style="left:440px;top:495px;width:36px;height:22px;box-sizing:border-box;border:1px solid #91d5ff;border-radius:2px;background:#e6f7ff;"></div><div class="t" style="left:440px;width:36px;top:498.15px;font-size:14px;line-height:16px;color:#1890ff;text-align:center;letter-spacing:-0.7px;text-indent:-0.7px">HC</div><div class="a" style="left:478px;top:495px;width:51px;height:22px;box-sizing:border-box;border:1px solid #91d5ff;border-radius:2px;background:#e6f7ff;"></div><div class="t" style="left:478px;width:51px;top:498.15px;font-size:14px;line-height:16px;color:#1890ff;text-align:center;letter-spacing:-0.65px;text-indent:-0.65px">Broad</div><div class="a" style="left:531px;top:495px;width:127px;height:22px;box-sizing:border-box;border:1px solid #91d5ff;border-radius:2px;background:#e6f7ff;"></div><div class="t" style="left:531px;width:127px;top:498.15px;font-size:14px;line-height:16px;color:#1890ff;text-align:center;letter-spacing:-0.3px;text-indent:-0.3px">Americana-Napkin</div><div class="a" style="left:660px;top:495px;width:43px;height:22px;box-sizing:border-box;border:1px solid #91d5ff;border-radius:2px;background:#e6f7ff;"></div><div class="t" style="left:660px;width:43px;top:498.15px;font-size:14px;line-height:16px;color:#1890ff;text-align:center;letter-spacing:-0.5px;text-indent:-0.5px">Ring</div><div class="a" style="left:705px;top:495px;width:27px;height:22px;box-sizing:border-box;border:1px solid #91d5ff;border-radius:2px;background:#e6f7ff;"></div><div class="t" style="left:705px;width:27px;top:498.15px;font-size:14px;line-height:16px;color:#1890ff;text-align:center;letter-spacing:-0.45px;text-indent:-0.45px">...</div><div class="t" style="left:758.2px;top:498.35px;font-size:14px;line-height:16px;color:#595959;letter-spacing:-1.0px;">AB</div><div class="t" style="left:854.3px;top:498.35px;font-size:14px;line-height:16px;color:#595959;letter-spacing:-0.45px;">0</div><div class="t" style="left:949.9px;top:498.35px;font-size:14px;line-height:16px;color:#595959;letter-spacing:-0.45px;">0</div><div class="t" style="left:1043.9px;top:498.35px;font-size:14px;line-height:16px;color:#595959;letter-spacing:0.475px;">$0.00</div><div class="t" style="left:1139.2px;top:498.35px;font-size:14px;line-height:16px;color:#595959;letter-spacing:0.475px;">$0.00</div><div class="t" style="left:1234.2px;top:498.35px;font-size:14px;line-height:16px;color:#595959;letter-spacing:0.475px;">$0.00</div><div class="t" style="left:1329.2px;top:498.35px;font-size:14px;line-height:16px;color:#595959;letter-spacing:0.333px;">0.00</div><div class="a" style="left:260px;top:524px;width:681px;height:1px;background:#e8e8e8;"></div><div class="a" style="left:942px;top:524px;width:473px;height:1px;background:#e8e8e8;"></div>
<div class="a" style="left:276px;top:535px;width:16px;height:16px;box-sizing:border-box;border:1px solid #d9d9d9;border-radius:2px;background:#fff;"></div><div class="t" style="left:316.6px;top:535.35px;font-size:14px;line-height:16px;color:#595959;letter-spacing:-0.76px;">Paused</div><div class="a" style="left:405px;top:532px;width:33px;height:22px;box-sizing:border-box;border:1px solid #91d5ff;border-radius:2px;background:#e6f7ff;"></div><div class="t" style="left:405px;width:33px;top:535.15px;font-size:14px;line-height:16px;color:#1890ff;text-align:center;letter-spacing:-1.0px;text-indent:-1.0px">BR</div><div class="a" style="left:440px;top:532px;width:36px;height:22px;box-sizing:border-box;border:1px solid #91d5ff;border-radius:2px;background:#e6f7ff;"></div><div class="t" style="left:440px;width:36px;top:535.15px;font-size:14px;line-height:16px;color:#1890ff;text-align:center;letter-spacing:-0.7px;text-indent:-0.7px">HC</div><div class="a" style="left:478px;top:532px;width:51px;height:22px;box-sizing:border-box;border:1px solid #91d5ff;border-radius:2px;background:#e6f7ff;"></div><div class="t" style="left:478px;width:51px;top:535.15px;font-size:14px;line-height:16px;color:#1890ff;text-align:center;letter-spacing:-0.65px;text-indent:-0.65px">Broad</div><div class="a" style="left:531px;top:532px;width:127px;height:22px;box-sizing:border-box;border:1px solid #91d5ff;border-radius:2px;background:#e6f7ff;"></div><div class="t" style="left:531px;width:127px;top:535.15px;font-size:14px;line-height:16px;color:#1890ff;text-align:center;letter-spacing:-0.3px;text-indent:-0.3px">Americana-Napkin</div><div class="a" style="left:660px;top:532px;width:43px;height:22px;box-sizing:border-box;border:1px solid #91d5ff;border-radius:2px;background:#e6f7ff;"></div><div class="t" style="left:660px;width:43px;top:535.15px;font-size:14px;line-height:16px;color:#1890ff;text-align:center;letter-spacing:-0.5px;text-indent:-0.5px">Ring</div><div class="a" style="left:705px;top:532px;width:27px;height:22px;box-sizing:border-box;border:1px solid #91d5ff;border-radius:2px;background:#e6f7ff;"></div><div class="t" style="left:705px;width:27px;top:535.15px;font-size:14px;line-height:16px;color:#1890ff;text-align:center;letter-spacing:-0.45px;text-indent:-0.45px">...</div><div class="t" style="left:758.2px;top:535.35px;font-size:14px;line-height:16px;color:#595959;letter-spacing:-1.0px;">AB</div><div class="t" style="left:854.3px;top:535.35px;font-size:14px;line-height:16px;color:#595959;letter-spacing:-0.45px;">0</div><div class="t" style="left:949.9px;top:535.35px;font-size:14px;line-height:16px;color:#595959;letter-spacing:-0.45px;">0</div><div class="t" style="left:1043.9px;top:535.35px;font-size:14px;line-height:16px;color:#595959;letter-spacing:0.475px;">$0.00</div><div class="t" style="left:1139.2px;top:535.35px;font-size:14px;line-height:16px;color:#595959;letter-spacing:0.475px;">$0.00</div><div class="t" style="left:1234.2px;top:535.35px;font-size:14px;line-height:16px;color:#595959;letter-spacing:0.475px;">$0.00</div><div class="t" style="left:1329.2px;top:535.35px;font-size:14px;line-height:16px;color:#595959;letter-spacing:0.333px;">0.00</div><div class="a" style="left:260px;top:561px;width:681px;height:1px;background:#e8e8e8;"></div><div class="a" style="left:942px;top:561px;width:473px;height:1px;background:#e8e8e8;"></div>
<div class="a" style="left:1246px;top:578px;width:32px;height:32px;box-sizing:border-box;border:1px solid #d9d9d9;border-radius:4px;background:#fff;"></div>
<svg class="a" style="left:1246px;top:578px" width="32" height="32" viewBox="0 0 32 32" fill="none" stroke="#595959" stroke-width="1.1"><path d="M18.5 11.5 L13.5 16.5 L18.5 21.5"/></svg>
<div class="a" style="left:1286px;top:578px;width:33px;height:32px;box-sizing:border-box;border:1px solid #1890ff;border-radius:4px;background:#fff;"></div>
<div class="t" style="left:1286px;width:33px;top:586px;font-size:14px;line-height:16px;color:#1890ff;text-align:center">1</div>
<div class="a" style="left:1327px;top:578px;width:33px;height:32px;box-sizing:border-box;border:1px solid #d9d9d9;border-radius:4px;background:#fff;"></div>
<div class="t" style="left:1327px;width:33px;top:586px;font-size:14px;line-height:16px;color:#434343;text-align:center">2</div>
<div class="a" style="left:1368px;top:578px;width:32px;height:32px;box-sizing:border-box;border:1px solid #d9d9d9;border-radius:4px;background:#fff;"></div>
<svg class="a" style="left:1368px;top:578px" width="32" height="32" viewBox="0 0 32 32" fill="none" stroke="#595959" stroke-width="1.1"><path d="M13.5 11.5 L18.5 16.5 L13.5 21.5"/></svg>
<svg class="a" style="left:277px;top:642px" width="12" height="8" viewBox="0 0 12 8"><path d="M0.5 0.5 H11.5 L6 7.5 Z" fill="#000"/></svg>
<div class="t" style="left:302.6px;top:638.30px;font-size:15px;line-height:17px;color:#000;font-weight:bold;letter-spacing:-0.088px;">Not in Collection</div>
<div class="a" style="left:260px;top:666px;width:681px;height:1px;background:#e8e8e8;"></div><div class="a" style="left:942px;top:666px;width:473px;height:1px;background:#e8e8e8;"></div>
<div class="a" style="left:276px;top:677px;width:16px;height:16px;box-sizing:border-box;border:1px solid #d9d9d9;border-radius:2px;background:#fff;"></div><div class="t" style="left:316.6px;top:677.35px;font-size:14px;line-height:16px;color:#595959;letter-spacing:-0.76px;">Paused</div><div class="a" style="left:405px;top:674px;width:33px;height:22px;box-sizing:border-box;border:1px solid #91d5ff;border-radius:2px;background:#e6f7ff;"></div><div class="t" style="left:405px;width:33px;top:677.15px;font-size:14px;line-height:16px;color:#1890ff;text-align:center;letter-spacing:-1.0px;text-indent:-1.0px">BR</div><div class="a" style="left:440px;top:674px;width:36px;height:22px;box-sizing:border-box;border:1px solid #91d5ff;border-radius:2px;background:#e6f7ff;"></div><div class="t" style="left:440px;width:36px;top:677.15px;font-size:14px;line-height:16px;color:#1890ff;text-align:center;letter-spacing:-0.7px;text-indent:-0.7px">HC</div><div class="a" style="left:478px;top:674px;width:51px;height:22px;box-sizing:border-box;border:1px solid #91d5ff;border-radius:2px;background:#e6f7ff;"></div><div class="t" style="left:478px;width:51px;top:677.15px;font-size:14px;line-height:16px;color:#1890ff;text-align:center;letter-spacing:-0.65px;text-indent:-0.65px">Broad</div><div class="a" style="left:531px;top:674px;width:127px;height:22px;box-sizing:border-box;border:1px solid #91d5ff;border-radius:2px;background:#e6f7ff;"></div><div class="t" style="left:531px;width:127px;top:677.15px;font-size:14px;line-height:16px;color:#1890ff;text-align:center;letter-spacing:-0.3px;text-indent:-0.3px">Americana-Napkin</div><div class="a" style="left:660px;top:674px;width:43px;height:22px;box-sizing:border-box;border:1px solid #91d5ff;border-radius:2px;background:#e6f7ff;"></div><div class="t" style="left:660px;width:43px;top:677.15px;font-size:14px;line-height:16px;color:#1890ff;text-align:center;letter-spacing:-0.5px;text-indent:-0.5px">Ring</div><div class="a" style="left:705px;top:674px;width:27px;height:22px;box-sizing:border-box;border:1px solid #91d5ff;border-radius:2px;background:#e6f7ff;"></div><div class="t" style="left:705px;width:27px;top:677.15px;font-size:14px;line-height:16px;color:#1890ff;text-align:center;letter-spacing:-0.45px;text-indent:-0.45px">...</div><div class="t" style="left:758.2px;top:677.35px;font-size:14px;line-height:16px;color:#595959;letter-spacing:-1.0px;">AB</div><div class="t" style="left:854.3px;top:677.35px;font-size:14px;line-height:16px;color:#595959;letter-spacing:-0.45px;">0</div><div class="t" style="left:949.9px;top:677.35px;font-size:14px;line-height:16px;color:#595959;letter-spacing:-0.45px;">0</div><div class="t" style="left:1043.9px;top:677.35px;font-size:14px;line-height:16px;color:#595959;letter-spacing:0.475px;">$0.00</div><div class="t" style="left:1139.2px;top:677.35px;font-size:14px;line-height:16px;color:#595959;letter-spacing:0.475px;">$0.00</div><div class="t" style="left:1234.2px;top:677.35px;font-size:14px;line-height:16px;color:#595959;letter-spacing:0.475px;">$0.00</div><div class="t" style="left:1329.2px;top:677.35px;font-size:14px;line-height:16px;color:#595959;letter-spacing:0.333px;">0.00</div><div class="a" style="left:260px;top:703px;width:681px;height:1px;background:#e8e8e8;"></div><div class="a" style="left:942px;top:703px;width:473px;height:1px;background:#e8e8e8;"></div>
<div class="a" style="left:276px;top:714px;width:16px;height:16px;box-sizing:border-box;border:1px solid #d9d9d9;border-radius:2px;background:#fff;"></div><div class="t" style="left:316.6px;top:714.35px;font-size:14px;line-height:16px;color:#595959;letter-spacing:-0.76px;">Paused</div><div class="a" style="left:405px;top:711px;width:33px;height:22px;box-sizing:border-box;border:1px solid #91d5ff;border-radius:2px;background:#e6f7ff;"></div><div class="t" style="left:405px;width:33px;top:714.15px;font-size:14px;line-height:16px;color:#1890ff;text-align:center;letter-spacing:-1.0px;text-indent:-1.0px">BR</div><div class="a" style="left:440px;top:711px;width:36px;height:22px;box-sizing:border-box;border:1px solid #91d5ff;border-radius:2px;background:#e6f7ff;"></div><div class="t" style="left:440px;width:36px;top:714.15px;font-size:14px;line-height:16px;color:#1890ff;text-align:center;letter-spacing:-0.7px;text-indent:-0.7px">HC</div><div class="a" style="left:478px;top:711px;width:51px;height:22px;box-sizing:border-box;border:1px solid #91d5ff;border-radius:2px;background:#e6f7ff;"></div><div class="t" style="left:478px;width:51px;top:714.15px;font-size:14px;line-height:16px;color:#1890ff;text-align:center;letter-spacing:-0.65px;text-indent:-0.65px">Broad</div><div class="a" style="left:531px;top:711px;width:127px;height:22px;box-sizing:border-box;border:1px solid #91d5ff;border-radius:2px;background:#e6f7ff;"></div><div class="t" style="left:531px;width:127px;top:714.15px;font-size:14px;line-height:16px;color:#1890ff;text-align:center;letter-spacing:-0.3px;text-indent:-0.3px">Americana-Napkin</div><div class="a" style="left:660px;top:711px;width:43px;height:22px;box-sizing:border-box;border:1px solid #91d5ff;border-radius:2px;background:#e6f7ff;"></div><div class="t" style="left:660px;width:43px;top:714.15px;font-size:14px;line-height:16px;color:#1890ff;text-align:center;letter-spacing:-0.5px;text-indent:-0.5px">Ring</div><div class="a" style="left:705px;top:711px;width:27px;height:22px;box-sizing:border-box;border:1px solid #91d5ff;border-radius:2px;background:#e6f7ff;"></div><div class="t" style="left:705px;width:27px;top:714.15px;font-size:14px;line-height:16px;color:#1890ff;text-align:center;letter-spacing:-0.45px;text-indent:-0.45px">...</div><div class="t" style="left:758.2px;top:714.35px;font-size:14px;line-height:16px;color:#595959;letter-spacing:-1.0px;">AB</div><div class="t" style="left:854.3px;top:714.35px;font-size:14px;line-height:16px;color:#595959;letter-spacing:-0.45px;">0</div><div class="t" style="left:949.9px;top:714.35px;font-size:14px;line-height:16px;color:#595959;letter-spacing:-0.45px;">0</div><div class="t" style="left:1043.9px;top:714.35px;font-size:14px;line-height:16px;color:#595959;letter-spacing:0.475px;">$0.00</div><div class="t" style="left:1139.2px;top:714.35px;font-size:14px;line-height:16px;color:#595959;letter-spacing:0.475px;">$0.00</div><div class="t" style="left:1234.2px;top:714.35px;font-size:14px;line-height:16px;color:#595959;letter-spacing:0.475px;">$0.00</div><div class="t" style="left:1329.2px;top:714.35px;font-size:14px;line-height:16px;color:#595959;letter-spacing:0.333px;">0.00</div><div class="a" style="left:260px;top:740px;width:681px;height:1px;background:#e8e8e8;"></div><div class="a" style="left:942px;top:740px;width:473px;height:1px;background:#e8e8e8;"></div>
<div class="a" style="left:276px;top:751px;width:16px;height:16px;box-sizing:border-box;border:1px solid #d9d9d9;border-radius:2px;background:#fff;"></div><div class="t" style="left:316.6px;top:751.35px;font-size:14px;line-height:16px;color:#595959;letter-spacing:-0.76px;">Paused</div><div class="a" style="left:405px;top:748px;width:33px;height:22px;box-sizing:border-box;border:1px solid #91d5ff;border-radius:2px;background:#e6f7ff;"></div><div class="t" style="left:405px;width:33px;top:751.15px;font-size:14px;line-height:16px;color:#1890ff;text-align:center;letter-spacing:-1.0px;text-indent:-1.0px">BR</div><div class="a" style="left:440px;top:748px;width:36px;height:22px;box-sizing:border-box;border:1px solid #91d5ff;border-radius:2px;background:#e6f7ff;"></div><div class="t" style="left:440px;width:36px;top:751.15px;font-size:14px;line-height:16px;color:#1890ff;text-align:center;letter-spacing:-0.7px;text-indent:-0.7px">HC</div><div class="a" style="left:478px;top:748px;width:51px;height:22px;box-sizing:border-box;border:1px solid #91d5ff;border-radius:2px;background:#e6f7ff;"></div><div class="t" style="left:478px;width:51px;top:751.15px;font-size:14px;line-height:16px;color:#1890ff;text-align:center;letter-spacing:-0.65px;text-indent:-0.65px">Broad</div><div class="a" style="left:531px;top:748px;width:127px;height:22px;box-sizing:border-box;border:1px solid #91d5ff;border-radius:2px;background:#e6f7ff;"></div><div class="t" style="left:531px;width:127px;top:751.15px;font-size:14px;line-height:16px;color:#1890ff;text-align:center;letter-spacing:-0.3px;text-indent:-0.3px">Americana-Napkin</div><div class="a" style="left:660px;top:748px;width:43px;height:22px;box-sizing:border-box;border:1px solid #91d5ff;border-radius:2px;background:#e6f7ff;"></div><div class="t" style="left:660px;width:43px;top:751.15px;font-size:14px;line-height:16px;color:#1890ff;text-align:center;letter-spacing:-0.5px;text-indent:-0.5px">Ring</div><div class="a" style="left:705px;top:748px;width:27px;height:22px;box-sizing:border-box;border:1px solid #91d5ff;border-radius:2px;background:#e6f7ff;"></div><div class="t" style="left:705px;width:27px;top:751.15px;font-size:14px;line-height:16px;color:#1890ff;text-align:center;letter-spacing:-0.45px;text-indent:-0.45px">...</div><div class="t" style="left:758.2px;top:751.35px;font-size:14px;line-height:16px;color:#595959;letter-spacing:-1.0px;">AB</div><div class="t" style="left:854.3px;top:751.35px;font-size:14px;line-height:16px;color:#595959;letter-spacing:-0.45px;">0</div><div class="t" style="left:949.9px;top:751.35px;font-size:14px;line-height:16px;color:#595959;letter-spacing:-0.45px;">0</div><div class="t" style="left:1043.9px;top:751.35px;font-size:14px;line-height:16px;color:#595959;letter-spacing:0.475px;">$0.00</div><div class="t" style="left:1139.2px;top:751.35px;font-size:14px;line-height:16px;color:#595959;letter-spacing:0.475px;">$0.00</div><div class="t" style="left:1234.2px;top:751.35px;font-size:14px;line-height:16px;color:#595959;letter-spacing:0.475px;">$0.00</div><div class="t" style="left:1329.2px;top:751.35px;font-size:14px;line-height:16px;color:#595959;letter-spacing:0.333px;">0.00</div><div class="a" style="left:260px;top:777px;width:681px;height:1px;background:#e8e8e8;"></div><div class="a" style="left:942px;top:777px;width:473px;height:1px;background:#e8e8e8;"></div>
<div class="a" style="left:276px;top:788px;width:16px;height:16px;box-sizing:border-box;border:1px solid #d9d9d9;border-radius:2px;background:#fff;"></div><div class="t" style="left:316.6px;top:788.35px;font-size:14px;line-height:16px;color:#595959;letter-spacing:-0.76px;">Paused</div><div class="a" style="left:405px;top:785px;width:33px;height:22px;box-sizing:border-box;border:1px solid #91d5ff;border-radius:2px;background:#e6f7ff;"></div><div class="t" style="left:405px;width:33px;top:788.15px;font-size:14px;line-height:16px;color:#1890ff;text-align:center;letter-spacing:-1.0px;text-indent:-1.0px">BR</div><div class="a" style="left:440px;top:785px;width:36px;height:22px;box-sizing:border-box;border:1px solid #91d5ff;border-radius:2px;background:#e6f7ff;"></div><div class="t" style="left:440px;width:36px;top:788.15px;font-size:14px;line-height:16px;color:#1890ff;text-align:center;letter-spacing:-0.7px;text-indent:-0.7px">HC</div><div class="a" style="left:478px;top:785px;width:51px;height:22px;box-sizing:border-box;border:1px solid #91d5ff;border-radius:2px;background:#e6f7ff;"></div><div class="t" style="left:478px;width:51px;top:788.15px;font-size:14px;line-height:16px;color:#1890ff;text-align:center;letter-spacing:-0.65px;text-indent:-0.65px">Broad</div><div class="a" style="left:531px;top:785px;width:127px;height:22px;box-sizing:border-box;border:1px solid #91d5ff;border-radius:2px;background:#e6f7ff;"></div><div class="t" style="left:531px;width:127px;top:788.15px;font-size:14px;line-height:16px;color:#1890ff;text-align:center;letter-spacing:-0.3px;text-indent:-0.3px">Americana-Napkin</div><div class="a" style="left:660px;top:785px;width:43px;height:22px;box-sizing:border-box;border:1px solid #91d5ff;border-radius:2px;background:#e6f7ff;"></div><div class="t" style="left:660px;width:43px;top:788.15px;font-size:14px;line-height:16px;color:#1890ff;text-align:center;letter-spacing:-0.5px;text-indent:-0.5px">Ring</div><div class="a" style="left:705px;top:785px;width:27px;height:22px;box-sizing:border-box;border:1px solid #91d5ff;border-radius:2px;background:#e6f7ff;"></div><div class="t" style="left:705px;width:27px;top:788.15px;font-size:14px;line-height:16px;color:#1890ff;text-align:center;letter-spacing:-0.45px;text-indent:-0.45px">...</div><div class="t" style="left:758.2px;top:788.35px;font-size:14px;line-height:16px;color:#595959;letter-spacing:-1.0px;">AB</div><div class="t" style="left:854.3px;top:788.35px;font-size:14px;line-height:16px;color:#595959;letter-spacing:-0.45px;">0</div><div class="t" style="left:949.9px;top:788.35px;font-size:14px;line-height:16px;color:#595959;letter-spacing:-0.45px;">0</div><div class="t" style="left:1043.9px;top:788.35px;font-size:14px;line-height:16px;color:#595959;letter-spacing:0.475px;">$0.00</div><div class="t" style="left:1139.2px;top:788.35px;font-size:14px;line-height:16px;color:#595959;letter-spacing:0.475px;">$0.00</div><div class="t" style="left:1234.2px;top:788.35px;font-size:14px;line-height:16px;color:#595959;letter-spacing:0.475px;">$0.00</div><div class="t" style="left:1329.2px;top:788.35px;font-size:14px;line-height:16px;color:#595959;letter-spacing:0.333px;">0.00</div><div class="a" style="left:260px;top:814px;width:681px;height:1px;background:#e8e8e8;"></div><div class="a" style="left:942px;top:814px;width:473px;height:1px;background:#e8e8e8;"></div>
<div class="a" style="left:260px;top:815px;width:48px;height:36px;background:#fafafa;"></div><div class="a" style="left:276px;top:825px;width:16px;height:16px;border-radius:2px;background:#1890ff;"></div><svg class="a" style="left:276px;top:825px" width="16" height="16" viewBox="0 0 16 16" fill="none" stroke="#fff" stroke-width="1.7"><path d="M3.2 7.8 L6.8 11.3 L12.5 4.2"/></svg><div class="t" style="left:316.6px;top:825.35px;font-size:14px;line-height:16px;color:#595959;letter-spacing:-0.76px;">Paused</div><div class="a" style="left:405px;top:822px;width:33px;height:22px;box-sizing:border-box;border:1px solid #91d5ff;border-radius:2px;background:#e6f7ff;"></div><div class="t" style="left:405px;width:33px;top:825.15px;font-size:14px;line-height:16px;color:#1890ff;text-align:center;letter-spacing:-1.0px;text-indent:-1.0px">BR</div><div class="a" style="left:440px;top:822px;width:36px;height:22px;box-sizing:border-box;border:1px solid #91d5ff;border-radius:2px;background:#e6f7ff;"></div><div class="t" style="left:440px;width:36px;top:825.15px;font-size:14px;line-height:16px;color:#1890ff;text-align:center;letter-spacing:-0.7px;text-indent:-0.7px">HC</div><div class="a" style="left:478px;top:822px;width:51px;height:22px;box-sizing:border-box;border:1px solid #91d5ff;border-radius:2px;background:#e6f7ff;"></div><div class="t" style="left:478px;width:51px;top:825.15px;font-size:14px;line-height:16px;color:#1890ff;text-align:center;letter-spacing:-0.65px;text-indent:-0.65px">Broad</div><div class="a" style="left:531px;top:822px;width:127px;height:22px;box-sizing:border-box;border:1px solid #91d5ff;border-radius:2px;background:#e6f7ff;"></div><div class="t" style="left:531px;width:127px;top:825.15px;font-size:14px;line-height:16px;color:#1890ff;text-align:center;letter-spacing:-0.3px;text-indent:-0.3px">Americana-Napkin</div><div class="a" style="left:660px;top:822px;width:43px;height:22px;box-sizing:border-box;border:1px solid #91d5ff;border-radius:2px;background:#e6f7ff;"></div><div class="t" style="left:660px;width:43px;top:825.15px;font-size:14px;line-height:16px;color:#1890ff;text-align:center;letter-spacing:-0.5px;text-indent:-0.5px">Ring</div><div class="a" style="left:705px;top:822px;width:27px;height:22px;box-sizing:border-box;border:1px solid #91d5ff;border-radius:2px;background:#e6f7ff;"></div><div class="t" style="left:705px;width:27px;top:825.15px;font-size:14px;line-height:16px;color:#1890ff;text-align:center;letter-spacing:-0.45px;text-indent:-0.45px">...</div><div class="t" style="left:758.2px;top:825.35px;font-size:14px;line-height:16px;color:#595959;letter-spacing:-1.0px;">AB</div><div class="t" style="left:854.3px;top:825.35px;font-size:14px;line-height:16px;color:#595959;letter-spacing:-0.45px;">0</div><div class="t" style="left:949.9px;top:825.35px;font-size:14px;line-height:16px;color:#595959;letter-spacing:-0.45px;">0</div><div class="t" style="left:1043.9px;top:825.35px;font-size:14px;line-height:16px;color:#595959;letter-spacing:0.475px;">$0.00</div><div class="t" style="left:1139.2px;top:825.35px;font-size:14px;line-height:16px;color:#595959;letter-spacing:0.475px;">$0.00</div><div class="t" style="left:1234.2px;top:825.35px;font-size:14px;line-height:16px;color:#595959;letter-spacing:0.475px;">$0.00</div><div class="t" style="left:1329.2px;top:825.35px;font-size:14px;line-height:16px;color:#595959;letter-spacing:0.333px;">0.00</div><div class="a" style="left:260px;top:851px;width:681px;height:1px;background:#e8e8e8;"></div><div class="a" style="left:942px;top:851px;width:473px;height:1px;background:#e8e8e8;"></div>
<div class="a" style="left:276px;top:862px;width:16px;height:16px;box-sizing:border-box;border:1px solid #d9d9d9;border-radius:2px;background:#fff;"></div><div class="t" style="left:316.6px;top:862.35px;font-size:14px;line-height:16px;color:#595959;letter-spacing:-0.76px;">Paused</div><div class="a" style="left:405px;top:859px;width:33px;height:22px;box-sizing:border-box;border:1px solid #91d5ff;border-radius:2px;background:#e6f7ff;"></div><div class="t" style="left:405px;width:33px;top:862.15px;font-size:14px;line-height:16px;color:#1890ff;text-align:center;letter-spacing:-1.0px;text-indent:-1.0px">BR</div><div class="a" style="left:440px;top:859px;width:36px;height:22px;box-sizing:border-box;border:1px solid #91d5ff;border-radius:2px;background:#e6f7ff;"></div><div class="t" style="left:440px;width:36px;top:862.15px;font-size:14px;line-height:16px;color:#1890ff;text-align:center;letter-spacing:-0.7px;text-indent:-0.7px">HC</div><div class="a" style="left:478px;top:859px;width:51px;height:22px;box-sizing:border-box;border:1px solid #91d5ff;border-radius:2px;background:#e6f7ff;"></div><div class="t" style="left:478px;width:51px;top:862.15px;font-size:14px;line-height:16px;color:#1890ff;text-align:center;letter-spacing:-0.65px;text-indent:-0.65px">Broad</div><div class="a" style="left:531px;top:859px;width:127px;height:22px;box-sizing:border-box;border:1px solid #91d5ff;border-radius:2px;background:#e6f7ff;"></div><div class="t" style="left:531px;width:127px;top:862.15px;font-size:14px;line-height:16px;color:#1890ff;text-align:center;letter-spacing:-0.3px;text-indent:-0.3px">Americana-Napkin</div><div class="a" style="left:660px;top:859px;width:43px;height:22px;box-sizing:border-box;border:1px solid #91d5ff;border-radius:2px;background:#e6f7ff;"></div><div class="t" style="left:660px;width:43px;top:862.15px;font-size:14px;line-height:16px;color:#1890ff;text-align:center;letter-spacing:-0.5px;text-indent:-0.5px">Ring</div><div class="a" style="left:705px;top:859px;width:27px;height:22px;box-sizing:border-box;border:1px solid #91d5ff;border-radius:2px;background:#e6f7ff;"></div><div class="t" style="left:705px;width:27px;top:862.15px;font-size:14px;line-height:16px;color:#1890ff;text-align:center;letter-spacing:-0.45px;text-indent:-0.45px">...</div><div class="t" style="left:758.2px;top:862.35px;font-size:14px;line-height:16px;color:#595959;letter-spacing:-1.0px;">AB</div><div class="t" style="left:854.3px;top:862.35px;font-size:14px;line-height:16px;color:#595959;letter-spacing:-0.45px;">0</div><div class="t" style="left:949.9px;top:862.35px;font-size:14px;line-height:16px;color:#595959;letter-spacing:-0.45px;">0</div><div class="t" style="left:1043.9px;top:862.35px;font-size:14px;line-height:16px;color:#595959;letter-spacing:0.475px;">$0.00</div><div class="t" style="left:1139.2px;top:862.35px;font-size:14px;line-height:16px;color:#595959;letter-spacing:0.475px;">$0.00</div><div class="t" style="left:1234.2px;top:862.35px;font-size:14px;line-height:16px;color:#595959;letter-spacing:0.475px;">$0.00</div><div class="t" style="left:1329.2px;top:862.35px;font-size:14px;line-height:16px;color:#595959;letter-spacing:0.333px;">0.00</div><div class="a" style="left:260px;top:888px;width:681px;height:1px;background:#e8e8e8;"></div><div class="a" style="left:942px;top:888px;width:473px;height:1px;background:#e8e8e8;"></div>
<div class="a" style="left:276px;top:899px;width:16px;height:16px;box-sizing:border-box;border:1px solid #d9d9d9;border-radius:2px;background:#fff;"></div><div class="t" style="left:316.6px;top:899.35px;font-size:14px;line-height:16px;color:#595959;letter-spacing:-0.76px;">Paused</div><div class="a" style="left:405px;top:896px;width:33px;height:22px;box-sizing:border-box;border:1px solid #91d5ff;border-radius:2px;background:#e6f7ff;"></div><div class="t" style="left:405px;width:33px;top:899.15px;font-size:14px;line-height:16px;color:#1890ff;text-align:center;letter-spacing:-1.0px;text-indent:-1.0px">BR</div><div class="a" style="left:440px;top:896px;width:36px;height:22px;box-sizing:border-box;border:1px solid #91d5ff;border-radius:2px;background:#e6f7ff;"></div><div class="t" style="left:440px;width:36px;top:899.15px;font-size:14px;line-height:16px;color:#1890ff;text-align:center;letter-spacing:-0.7px;text-indent:-0.7px">HC</div><div class="a" style="left:478px;top:896px;width:51px;height:22px;box-sizing:border-box;border:1px solid #91d5ff;border-radius:2px;background:#e6f7ff;"></div><div class="t" style="left:478px;width:51px;top:899.15px;font-size:14px;line-height:16px;color:#1890ff;text-align:center;letter-spacing:-0.65px;text-indent:-0.65px">Broad</div><div class="a" style="left:531px;top:896px;width:127px;height:22px;box-sizing:border-box;border:1px solid #91d5ff;border-radius:2px;background:#e6f7ff;"></div><div class="t" style="left:531px;width:127px;top:899.15px;font-size:14px;line-height:16px;color:#1890ff;text-align:center;letter-spacing:-0.3px;text-indent:-0.3px">Americana-Napkin</div><div class="a" style="left:660px;top:896px;width:43px;height:22px;box-sizing:border-box;border:1px solid #91d5ff;border-radius:2px;background:#e6f7ff;"></div><div class="t" style="left:660px;width:43px;top:899.15px;font-size:14px;line-height:16px;color:#1890ff;text-align:center;letter-spacing:-0.5px;text-indent:-0.5px">Ring</div><div class="a" style="left:705px;top:896px;width:27px;height:22px;box-sizing:border-box;border:1px solid #91d5ff;border-radius:2px;background:#e6f7ff;"></div><div class="t" style="left:705px;width:27px;top:899.15px;font-size:14px;line-height:16px;color:#1890ff;text-align:center;letter-spacing:-0.45px;text-indent:-0.45px">...</div><div class="t" style="left:758.2px;top:899.35px;font-size:14px;line-height:16px;color:#595959;letter-spacing:-1.0px;">AB</div><div class="t" style="left:854.3px;top:899.35px;font-size:14px;line-height:16px;color:#595959;letter-spacing:-0.45px;">0</div><div class="t" style="left:949.9px;top:899.35px;font-size:14px;line-height:16px;color:#595959;letter-spacing:-0.45px;">0</div><div class="t" style="left:1043.9px;top:899.35px;font-size:14px;line-height:16px;color:#595959;letter-spacing:0.475px;">$0.00</div><div class="t" style="left:1139.2px;top:899.35px;font-size:14px;line-height:16px;color:#595959;letter-spacing:0.475px;">$0.00</div><div class="t" style="left:1234.2px;top:899.35px;font-size:14px;line-height:16px;color:#595959;letter-spacing:0.475px;">$0.00</div><div class="t" style="left:1329.2px;top:899.35px;font-size:14px;line-height:16px;color:#595959;letter-spacing:0.333px;">0.00</div><div class="a" style="left:260px;top:925px;width:681px;height:1px;background:#e8e8e8;"></div><div class="a" style="left:942px;top:925px;width:473px;height:1px;background:#e8e8e8;"></div>
<div class="a" style="left:1246px;top:942px;width:32px;height:32px;box-sizing:border-box;border:1px solid #d9d9d9;border-radius:4px;background:#fff;"></div>
<svg class="a" style="left:1246px;top:942px" width="32" height="32" viewBox="0 0 32 32" fill="none" stroke="#595959" stroke-width="1.1"><path d="M18.5 11.5 L13.5 16.5 L18.5 21.5"/></svg>
<div class="a" style="left:1286px;top:942px;width:33px;height:32px;box-sizing:border-box;border:1px solid #1890ff;border-radius:4px;background:#fff;"></div>
<div class="t" style="left:1286px;width:33px;top:950px;font-size:14px;line-height:16px;color:#1890ff;text-align:center">1</div>
<div class="a" style="left:1327px;top:942px;width:33px;height:32px;box-sizing:border-box;border:1px solid #d9d9d9;border-radius:4px;background:#fff;"></div>
<div class="t" style="left:1327px;width:33px;top:950px;font-size:14px;line-height:16px;color:#434343;text-align:center">2</div>
<div class="a" style="left:1368px;top:942px;width:32px;height:32px;box-sizing:border-box;border:1px solid #d9d9d9;border-radius:4px;background:#fff;"></div>
<svg class="a" style="left:1368px;top:942px" width="32" height="32" viewBox="0 0 32 32" fill="none" stroke="#595959" stroke-width="1.1"><path d="M13.5 11.5 L18.5 16.5 L13.5 21.5"/></svg>
</div></body></html>
